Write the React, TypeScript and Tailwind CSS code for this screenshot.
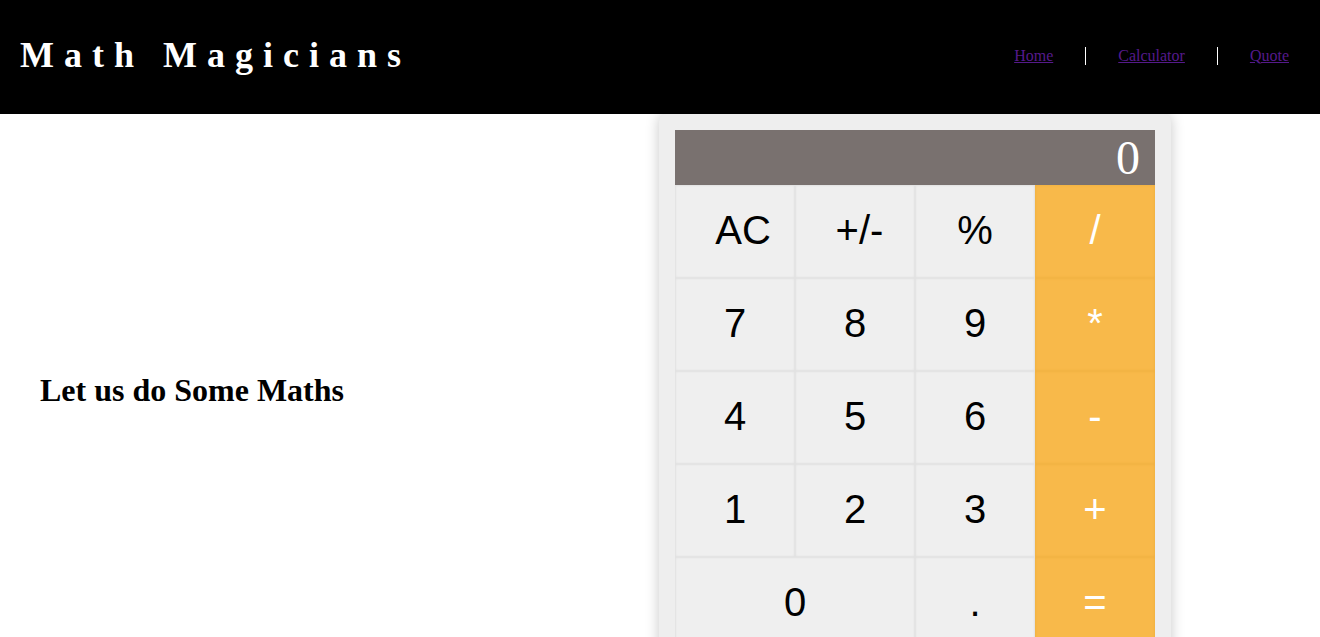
import React from "react";

const serif = { fontFamily: '"Liberation Serif", "Times New Roman", serif' };

function Btn({
  label,
  orange,
  wide,
  extra,
}: {
  label: string;
  orange?: boolean;
  wide?: boolean;
  extra?: string;
}) {
  return (
    <button
      type="button"
      className={
        "h-[93px] flex items-center justify-center pb-[3px] text-[40px] font-['Liberation_Sans',Arial,sans-serif] " +
        (orange
          ? "bg-[#f8b94a] text-white shadow-[inset_0_0_2px_1px_rgba(200,130,20,0.12)] "
          : "bg-[#efefef] text-black shadow-[inset_0_0_2px_1px_rgba(0,0,0,0.06)] ") +
        (wide ? "col-span-2 " : "") +
        (extra ?? "")
      }
    >
      {label}
    </button>
  );
}

export default function App() {
  return (
    <div className="min-h-screen bg-white" style={serif}>
      <header className="h-[114px] bg-black flex items-center justify-between pl-5">
        <h1 className="m-0 mb-1 text-white font-bold text-[36px] leading-normal tracking-[10px]">
          Math Magicians
        </h1>
        <ul className="flex items-center mb-[3px] text-[16px] leading-[18px]">
          <li className="px-8">
            <a href="#" className="text-[#551a8b] underline">
              Home
            </a>
          </li>
          <li className="px-8 border-l border-white">
            <a href="#" className="text-[#551a8b] underline">
              Calculator
            </a>
          </li>
          <li className="pl-8 pr-[31px] border-l border-white">
            <a href="#" className="text-[#551a8b] underline">
              Quote
            </a>
          </li>
        </ul>
      </header>
      <main className="flex items-center">
        <div className="w-[659px] pl-10 flex items-center">
          <h2 className="m-0 text-[32px] font-bold leading-normal text-black">
            Let us do Some Maths
          </h2>
        </div>
        <div className="w-[512px] bg-[#eeeeee] rounded-lg p-4 shadow-[0_0_14px_rgba(0,0,0,0.22)]">
          <div className="h-[55px] bg-[#79716f] text-white text-right pr-[15px] text-[48px] leading-[55px]">
            0
          </div>
          <div className="grid grid-cols-4">
            <Btn label="AC" extra="pl-4" />
            <Btn label="+/-" extra="pl-[9px]" />
            <Btn label="%" />
            <Btn label="/" orange />
            <Btn label="7" />
            <Btn label="8" />
            <Btn label="9" />
            <Btn label="*" orange />
            <Btn label="4" />
            <Btn label="5" />
            <Btn label="6" />
            <Btn label="-" orange />
            <Btn label="1" />
            <Btn label="2" />
            <Btn label="3" />
            <Btn label="+" orange />
            <Btn label="0" wide />
            <Btn label="." />
            <Btn label="=" orange />
          </div>
        </div>
      </main>
    </div>
  );
}
